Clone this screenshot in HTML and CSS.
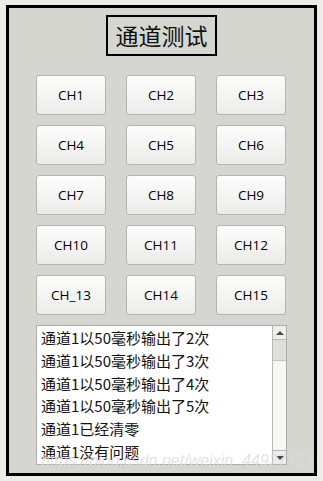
FILE: index.html
```html
<!DOCTYPE html>
<html>
<head>
<meta charset="utf-8">
<link rel="stylesheet" href="styles.css">
</head>
<body>
<div class="frame">
  <div class="title">通道测试</div>
  <div class="grid">
    <button class="btn">CH1</button>
    <button class="btn">CH2</button>
    <button class="btn">CH3</button>
    <button class="btn">CH4</button>
    <button class="btn">CH5</button>
    <button class="btn">CH6</button>
    <button class="btn">CH7</button>
    <button class="btn">CH8</button>
    <button class="btn">CH9</button>
    <button class="btn">CH10</button>
    <button class="btn">CH11</button>
    <button class="btn">CH12</button>
    <button class="btn">CH_13</button>
    <button class="btn">CH14</button>
    <button class="btn">CH15</button>
  </div>
  <div class="list">
    <div class="items">
      <div class="item">通道1以50毫秒输出了2次</div>
      <div class="item">通道1以50毫秒输出了3次</div>
      <div class="item">通道1以50毫秒输出了4次</div>
      <div class="item">通道1以50毫秒输出了5次</div>
      <div class="item">通道1已经清零</div>
      <div class="item">通道1没有问题</div>
    </div>
    <div class="sbar">
      <div class="sbtn up"><span class="tri-up"></span></div>
      <div class="thumb"></div>
      <div class="track"></div>
      <div class="sbtn down"><span class="tri-down"></span></div>
    </div>
  </div>
</div>
<div class="watermark">https://blog.csdn.net/weixin_44927463</div>
</body>
</html>
```
FILE: styles.css
```css
html, body {
  margin: 0;
  padding: 0;
}
body {
  background: #eeece8;
  width: 323px;
  height: 481px;
  position: relative;
  overflow: hidden;
  font-family: "Noto Sans", "Noto Sans CJK SC", sans-serif;
}
.frame {
  box-sizing: border-box;
  margin: 5px 0 0 6px;
  width: 311px;
  height: 471px;
  border: 3px solid #000;
  background: #d4d6cf;
  display: flex;
  flex-direction: column;
  align-items: center;
  padding-top: 7px;
}
.title {
  box-sizing: border-box;
  width: 111px;
  height: 41px;
  border: 2px solid #000;
  font-family: "Noto Sans CJK SC", sans-serif;
  font-size: 23px;
  line-height: 37px;
  text-align: center;
  color: #111;
}
.grid {
  margin-top: 19px;
  display: grid;
  grid-template-columns: repeat(3, 70px);
  grid-auto-rows: 40px;
  column-gap: 20px;
  row-gap: 10px;
  margin-left: -1px;
}
.btn {
  box-sizing: border-box;
  border: 1px solid #b4b4b0;
  border-radius: 3px;
  background: linear-gradient(#fdfdfd, #ebebea);
  font-family: "Open Sans", "Noto Sans", sans-serif;
  font-size: 13.5px;
  color: #000;
  padding: 0;
  margin: 0;
}
.list {
  box-sizing: border-box;
  margin-top: 10px;
  width: 251px;
  height: 140px;
  border: 1px solid #adadab;
  background: #fff;
  display: flex;
}
.items {
  flex: 1;
  padding: 1px 0 0 4px;
  font-family: "Noto Sans CJK SC", sans-serif;
  font-size: 15px;
  line-height: 22.8px;
  color: #111;
  overflow: hidden;
}
.item {
  white-space: nowrap;
}
.sbar {
  width: 14px;
  box-sizing: border-box;
  border-left: 1px solid #b8b8b8;
  display: flex;
  flex-direction: column;
  background: #f7f7f6;
}
.sbtn {
  height: 13px;
  background: #eeeeec;
  display: flex;
  align-items: center;
  justify-content: center;
}
.sbtn.up {
  border-bottom: 1px solid #b8b8b8;
}
.sbtn.down {
  border-top: 1px solid #b8b8b8;
}
.thumb {
  height: 20px;
  background: #dededc;
  border-bottom: 1px solid #c4c4c2;
}
.track {
  flex: 1;
}
.tri-up {
  width: 0;
  height: 0;
  border-left: 4px solid transparent;
  border-right: 4px solid transparent;
  border-bottom: 4px solid #4a4a4a;
}
.tri-down {
  width: 0;
  height: 0;
  border-left: 4px solid transparent;
  border-right: 4px solid transparent;
  border-top: 4px solid #4a4a4a;
}
.watermark {
  position: absolute;
  left: 41px;
  top: 452px;
  font-family: "Liberation Sans", Arial, sans-serif;
  font-style: italic;
  font-size: 16px;
  line-height: 18px;
  color: rgba(220, 220, 220, 0.8);
  white-space: nowrap;
}
```
